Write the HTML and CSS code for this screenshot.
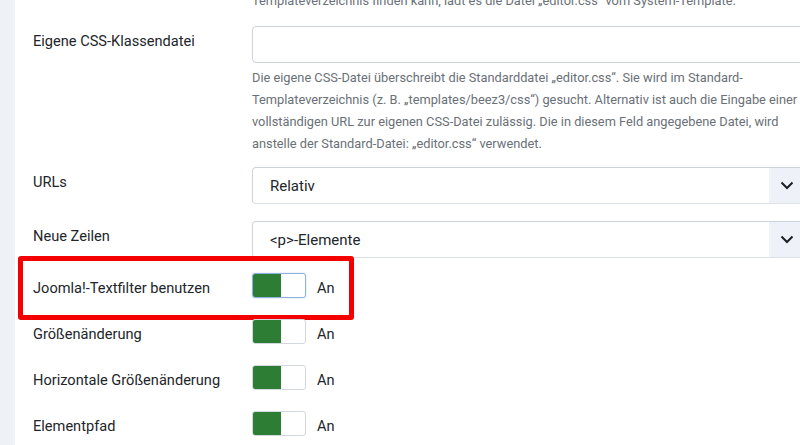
FILE: index.html
```html
<!DOCTYPE html>
<html lang="de">
  <head>
    <meta charset="UTF-8" />
    <meta name="viewport" content="width=device-width, initial-scale=1.0" />
    <title>Editor - TinyMCE Optionen</title>
    <link rel="stylesheet" href="styles.css">
  </head>
  <body>
    <div class="sidebar"></div>
    <div class="main">
      <div class="row tail-row">
        <div></div>
        <p class="desc">Templateverzeichnis finden kann, lädt es die Datei „editor.css“ vom System-Template.</p>
      </div>

      <div class="row">
        <label class="label">Eigene CSS-Klassendatei</label>
        <div class="control">
          <input class="text-input" type="text" />
          <p class="desc">Die eigene CSS-Datei überschreibt die Standarddatei „editor.css“. Sie wird im Standard-Templateverzeichnis (z. B. „templates/beez3/css“) gesucht. Alternativ ist auch die Eingabe einer vollständigen URL zur eigenen CSS-Datei zulässig. Die in diesem Feld angegebene Datei, wird anstelle der Standard-Datei: „editor.css“ verwendet.</p>
        </div>
      </div>

      <div class="row row-select">
        <label class="label">URLs</label>
        <div class="control">
          <div class="select">
            <span>Relativ</span>
            <span class="chevron">
              <svg width="14" height="9" viewBox="0 0 14 9"><path d="M1.5 1.5 L7 7 L12.5 1.5" fill="none" stroke="#1c2024" stroke-width="2"/></svg>
            </span>
          </div>
        </div>
      </div>

      <div class="row row-select last-select">
        <label class="label">Neue Zeilen</label>
        <div class="control">
          <div class="select">
            <span>&lt;p&gt;-Elemente</span>
            <span class="chevron">
              <svg width="14" height="9" viewBox="0 0 14 9"><path d="M1.5 1.5 L7 7 L12.5 1.5" fill="none" stroke="#1c2024" stroke-width="2"/></svg>
            </span>
          </div>
        </div>
      </div>

      <div class="row toggle-row highlight">
        <label class="label">Joomla!-Textfilter benutzen</label>
        <div class="control switch-line">
          <span class="switch focused"><span class="knob"></span></span>
          <span class="switch-text">An</span>
        </div>
      </div>

      <div class="row toggle-row">
        <label class="label">Größenänderung</label>
        <div class="control switch-line">
          <span class="switch"><span class="knob"></span></span>
          <span class="switch-text">An</span>
        </div>
      </div>

      <div class="row toggle-row">
        <label class="label">Horizontale Größenänderung</label>
        <div class="control switch-line">
          <span class="switch"><span class="knob"></span></span>
          <span class="switch-text">An</span>
        </div>
      </div>

      <div class="row toggle-row">
        <label class="label">Elementpfad</label>
        <div class="control switch-line">
          <span class="switch"><span class="knob"></span></span>
          <span class="switch-text">An</span>
        </div>
      </div>
    </div>
  </body>
</html>
```

FILE: styles.css
```css
html,
body {
  margin: 0;
  padding: 0;
  height: 100%;
}

body {
  display: flex;
  background: #fff;
  font-family: Roboto, "Liberation Sans", sans-serif;
  color: #22262a;
  overflow: hidden;
}

.sidebar {
  flex: 0 0 15px;
  background: #eef1f6;
}

.main {
  padding-left: 18px;
  flex: 1;
}

.row {
  display: grid;
  grid-template-columns: 219px 560px;
  margin-bottom: 12px;
  position: relative;
}

.tail-row {
  margin-top: -10px;
  margin-bottom: 14px;
}

.row-select {
  margin-bottom: 17px;
}

.last-select {
  margin-bottom: 15px;
}

.label {
  font-size: 14.6px;
  line-height: 21px;
  padding-top: 5px;
}

.desc {
  margin: 4px 0 0;
  font-size: 12.8px;
  line-height: 22px;
  color: #6a7077;
}

.tail-row .desc {
  margin: 0;
}

.text-input {
  display: block;
  box-sizing: border-box;
  width: 100%;
  height: 37px;
  margin: 0;
  border: 1px solid #cdd3da;
  border-radius: 4px;
  background: #fff;
}

.select {
  display: flex;
  align-items: center;
  justify-content: space-between;
  box-sizing: border-box;
  height: 37px;
  border: 1px solid #cdd3da;
  border-bottom-color: #dde2e8;
  border-radius: 4px;
  overflow: hidden;
  font-size: 15px;
  padding-left: 17px;
}

.chevron {
  display: flex;
  align-items: center;
  justify-content: center;
  align-self: stretch;
  width: 36px;
  background: #eef2f8;
  padding-right: 6px;
}

/* toggles */
.toggle-row {
  margin-bottom: 20px;
}

.switch-line {
  display: flex;
  align-items: flex-start;
  gap: 11px;
}

.switch {
  display: block;
  box-sizing: border-box;
  width: 54px;
  height: 25px;
  border: 1px solid #d3d8de;
  border-radius: 3px;
  background: #fff;
  overflow: hidden;
}

.switch.focused {
  border-color: #8fb2dc;
  box-shadow: 0 0 2px rgba(80, 130, 200, 0.35);
}

.knob {
  display: block;
  width: 28px;
  height: 100%;
  background: #2e7d35;
}

.switch-text {
  font-size: 14.6px;
  line-height: 20px;
  padding-top: 5px;
}

/* red marker around the first toggle */
.highlight::after {
  content: "";
  position: absolute;
  left: -15px;
  top: -17px;
  width: 336px;
  height: 64px;
  box-sizing: border-box;
  border: 5px solid #f40000;
  border-radius: 3px;
  pointer-events: none;
}
```
